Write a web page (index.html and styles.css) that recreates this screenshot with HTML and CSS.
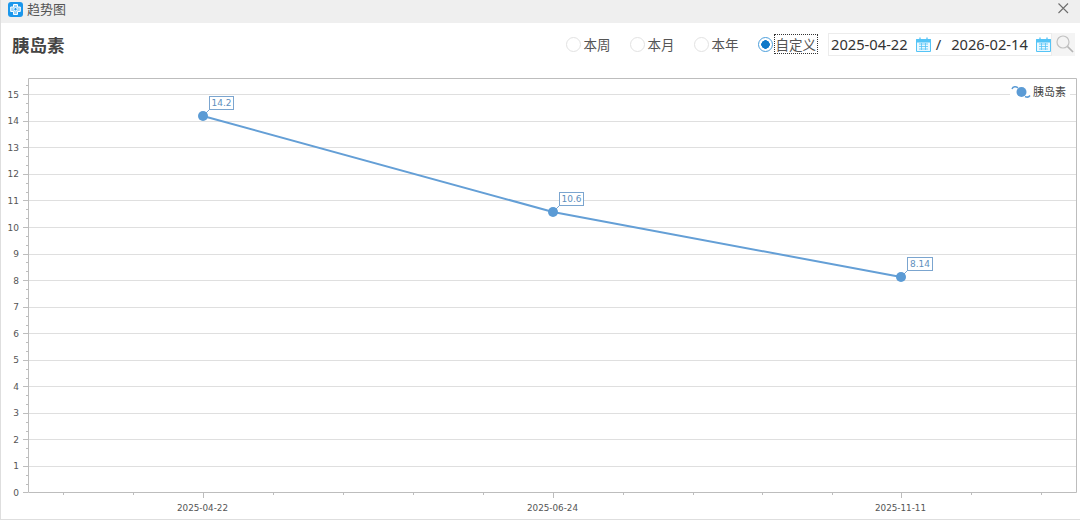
FILE: index.html
```html
<!DOCTYPE html>
<html lang="zh">
<head>
<meta charset="utf-8">
<title>趋势图</title>
<link rel="stylesheet" href="styles.css">
</head>
<body>
<div class="window">
  <header class="titlebar">
    <div class="title-left">
      <svg class="app-logo" width="15" height="15" viewBox="0 0 15 15">
        <rect width="15" height="15" rx="3" fill="#1b97ec"/>
        <path d="M5.500 2.500h4v2.500h2.800v4.500H9.500v3h-4v-3H2.700V5h2.800z" fill="#9ad2f7" stroke="#fff" stroke-width="1"/>
        <circle cx="7.500" cy="7.200" r="1.700" fill="#1b97ec" stroke="#fff" stroke-width=".9"/>
      </svg>
      <span class="title-text">趋势图</span>
    </div>
    <svg class="close" width="12" height="12" viewBox="0 0 12 12"><path d="M1.500 1.500l9.500 9.500M11 1.500L1.500 11" stroke="#6e6e6e" stroke-width="1.100" fill="none"/></svg>
  </header>
  <section class="toolbar">
    <h1 class="heading">胰岛素</h1>
    <div class="controls">
      <div class="radios">
        <label class="radio"><i class="dot"></i><span>本周</span></label>
        <label class="radio"><i class="dot"></i><span>本月</span></label>
        <label class="radio"><i class="dot"></i><span>本年</span></label>
        <label class="radio active"><i class="dot"></i><span class="focus">自定义</span></label>
      </div>
      <div class="dates">
        <span class="date">2025-04-22</span>
        <svg class="cal" width="15" height="15" viewBox="0 0 15 15">
          <path d="M.5 2.500h14v12H.5z" fill="#eaf8ff" stroke="#55c4f6"/>
          <path d="M.5 2.500h14v2.500H.5z" fill="#55c4f6" stroke="#55c4f6"/>
          <path d="M4 .5v3M11 .5v3" stroke="#55c4f6" stroke-width="1.300"/>
          <path d="M3 7h9M3 9.500h9M3 12h9M5.500 6v7M9.500 6v7" stroke="#55c4f6" stroke-width=".8"/>
        </svg>
        <span class="slash">/</span>
        <span class="date date-end">2026-02-14</span>
        <svg class="cal" width="15" height="15" viewBox="0 0 15 15">
          <path d="M.5 2.500h14v12H.5z" fill="#eaf8ff" stroke="#55c4f6"/>
          <path d="M.5 2.500h14v2.500H.5z" fill="#55c4f6" stroke="#55c4f6"/>
          <path d="M4 .5v3M11 .5v3" stroke="#55c4f6" stroke-width="1.300"/>
          <path d="M3 7h9M3 9.500h9M3 12h9M5.500 6v7M9.500 6v7" stroke="#55c4f6" stroke-width=".8"/>
        </svg>
      </div>
      <button class="search" type="button" aria-label="搜索">
        <svg width="18" height="18" viewBox="0 0 18 18"><circle cx="7" cy="7" r="6" fill="none" stroke="#c2c2c2" stroke-width="1.200"/><path d="M11.500 11.500l5.500 5.500" stroke="#b5b5b5" stroke-width="1.700"/></svg>
      </button>
    </div>
  </section>
  <svg class="chart" width="1079" height="441" viewBox="0 0 1079 441" role="img">
    <g transform="translate(-1 -78)">
      <path class="grid" d="M28 94.500H1076M28 121.500H1076M28 147.500H1076M28 174.500H1076M28 200.500H1076M28 227.500H1076M28 254.500H1076M28 280.500H1076M28 307.500H1076M28 333.500H1076M28 360.500H1076M28 386.500H1076M28 413.500H1076M28 439.500H1076M28 466.500H1076"/>
      <path class="axis" d="M28.500 78.500H1076.500V492.500H28.500Z"/>
      <path class="tick" d="M23 94.500h5M23 121.500h5M23 147.500h5M23 174.500h5M23 200.500h5M23 227.500h5M23 254.500h5M23 280.500h5M23 307.500h5M23 333.500h5M23 360.500h5M23 386.500h5M23 413.500h5M23 439.500h5M23 466.500h5M23 492.500h5M203.500 493v5M553.500 493v5M901.500 493v5"/>
      <path class="tick" d="M26 85.500h2M26 103.500h2M26 112.500h2M26 130.500h2M26 139.500h2M26 156.500h2M26 165.500h2M26 183.500h2M26 192.500h2M26 209.500h2M26 218.500h2M26 236.500h2M26 245.500h2M26 262.500h2M26 271.500h2M26 289.500h2M26 298.500h2M26 316.500h2M26 325.500h2M26 342.500h2M26 351.500h2M26 369.500h2M26 378.500h2M26 395.500h2M26 404.500h2M26 422.500h2M26 431.500h2M26 448.500h2M26 457.500h2M26 475.500h2M26 484.500h2"/>
      <path class="tick" d="M63.500 493v2M133.500 493v2M273.500 493v2M343.500 493v2M413.500 493v2M483.500 493v2M623.500 493v2M693.500 493v2M762.500 493v2M832.500 493v2M971.500 493v2M1041.500 493v2"/>
      <g class="ylabels">
        <text x="19" y="98">15</text><text x="19" y="124">14</text><text x="19" y="151">13</text><text x="19" y="177">12</text>
        <text x="19" y="204">11</text><text x="19" y="231">10</text><text x="19" y="257">9</text><text x="19" y="284">8</text>
        <text x="19" y="310">7</text><text x="19" y="337">6</text><text x="19" y="363">5</text><text x="19" y="390">4</text>
        <text x="19" y="416">3</text><text x="19" y="443">2</text><text x="19" y="469">1</text><text x="19" y="496">0</text>
      </g>
      <g class="xlabels">
        <text x="202.500" y="511">2025-04-22</text><text x="552.500" y="511">2025-06-24</text><text x="900.500" y="511">2025-11-11</text>
      </g>
      <path class="series" d="M203 116L553 212L901 277"/>
      <path class="leader" d="M203 116L210 109M553 212L560 205M901 277L908 270"/>
      <circle class="pt" cx="203" cy="116" r="5"/><circle class="pt" cx="553" cy="212" r="5"/><circle class="pt" cx="901" cy="277" r="5"/>
      <g class="dlabel"><rect x="209.500" y="96.500" width="24" height="13"/><text x="221.500" y="106">14.2</text></g>
      <g class="dlabel"><rect x="559.500" y="192.500" width="24" height="13"/><text x="571.500" y="202">10.6</text></g>
      <g class="dlabel"><rect x="907.500" y="257.500" width="25" height="13"/><text x="920" y="267">8.14</text></g>
      <rect class="legend-bg" x="1010" y="85" width="60" height="14"/>
      <path class="legend-line" d="M1012 89c1-2.500 4-3 6-1M1025 96.500c2 1 4 .5 5-1"/>
      <circle class="pt" cx="1021.500" cy="92" r="5"/>
      <text class="legend-text" x="1033" y="96">胰岛素</text>
    </g>
  </svg>
</div>
</body>
</html>
```
FILE: styles.css
```css
* { box-sizing: border-box; }
html, body { margin: 0; padding: 0; background: #fff; }
body { width: 1080px; height: 520px; overflow: hidden; font-family: "Noto Sans", "Noto Sans CJK SC", sans-serif; color: #444; }
.window { width: 1080px; height: 520px; display: flex; flex-direction: column; border-left: 1px solid #dedede; border-bottom: 1px solid #dedede; }
.titlebar { height: 23px; flex: none; display: flex; align-items: center; justify-content: space-between; background: #efefef; padding: 0 11px 0 7px; }
.title-left { display: flex; align-items: center; gap: 4px; }
.app-logo { display: block; margin-top: -4px; }
.title-text { font: 13px/16px "Noto Sans CJK SC", sans-serif; color: #555; margin-top: -5px; }
.close { margin-top: -8px; }
.toolbar { height: 55px; flex: none; display: flex; align-items: center; justify-content: space-between; padding: 0 5px 13px 11px; }
.heading { margin: 2px 0 0; font: 700 17.500px/24px "Noto Sans CJK SC", sans-serif; color: #444; }
.controls { display: flex; align-items: center; }
.radios { display: flex; align-items: center; gap: 19px; margin-right: 11px; }
.radio { display: flex; align-items: center; gap: 3px; font: 13.500px/18px "Noto Sans CJK SC", sans-serif; color: #555; }
.dot { width: 15px; height: 15px; border-radius: 50%; border: 1px solid #e2e2e2; background: #fff; display: block; }
.radio.active .dot { border: 1.500px solid #4c9fdc; background: radial-gradient(circle, #0f78c8 0 4px, #fff 4.500px); }
.focus { outline: 1px dotted #333; outline-offset: 0; padding: 0 1px; }
.radio.active { gap: 2px; }
.dates { width: 224px; height: 23px; flex: none; display: flex; align-items: center; border: 1px solid #ececec; padding-left: 2px; color: #333; }
.date { font: 14.700px/20px "Noto Sans", sans-serif; color: #333; white-space: nowrap; }
.cal { margin-left: 8px; flex: none; }
.slash { margin: 0 10px 0 5px; font: 14.700px/20px "Noto Sans", sans-serif; }
.search { width: 23px; height: 23px; padding: 0 0 0 2px; border: 0; background: #f4f4f4; display: flex; align-items: center; justify-content: center; }
.chart { display: block; flex: none; }
.grid { stroke: #dfdfdf; stroke-width: 1; fill: none; }
.axis { stroke: #bdbdbd; stroke-width: 1; fill: none; }
.tick { stroke: #bdbdbd; stroke-width: 1; fill: none; }
.ylabels text { font: 9px "DejaVu Sans", sans-serif; fill: #555; text-anchor: end; }
.xlabels text { font: 8.800px "DejaVu Sans", sans-serif; fill: #555; text-anchor: middle; }
.series { stroke: #649fd6; stroke-width: 2; fill: none; }
.leader { stroke: #7aa8d6; stroke-width: 1; fill: none; }
.pt { fill: #5b9bd5; }
.dlabel rect { fill: #fff; stroke: #7ba5cf; stroke-width: 1; }
.dlabel text { font: 9px "DejaVu Sans", sans-serif; fill: #5f8fbd; text-anchor: middle; }
.legend-bg { fill: #fff; }
.legend-line { stroke: #5b9bd5; stroke-width: 1.500; fill: none; }
.legend-text { font: 11px "Noto Sans CJK SC", sans-serif; fill: #444; }
```
